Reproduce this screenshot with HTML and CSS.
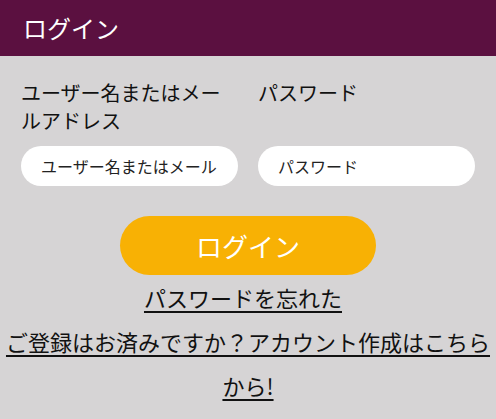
FILE: index.html
```html
<!DOCTYPE html>
<html lang="ja">
<head>
    <meta charset="UTF-8">
    <meta name="viewport" content="width=device-width, initial-scale=1.0">
    <title>ログイン</title>
    <link rel="stylesheet" href="styles.css">
</head>
<body>
    <header class="top-bar">
        <h1>ログイン</h1>
    </header>
    <main class="login-page">
        <form class="login-form">
            <div class="fields">
                <label for="username">ユーザー名またはメールアドレス</label>
                <label for="password">パスワード</label>
                <input type="text" id="username" name="username" placeholder="ユーザー名またはメール">
                <input type="password" id="password" name="password" placeholder="パスワード">
            </div>
            <button type="submit" class="login-btn">ログイン</button>
        </form>
        <div class="links">
            <p class="forgot"><a href="#">パスワードを忘れた</a></p>
            <p><a href="#">ご登録はお済みですか？アカウント作成はこちらから!</a></p>
        </div>
    </main>
</body>
</html>
```

FILE: styles.css
```css
body {
    margin: 0;
    padding: 0;
    background-color: #d6d4d5;
    color: #111;
    font-family: "Noto Sans CJK JP", "Noto Sans", sans-serif;
}
.top-bar {
    background-color: #5b1040;
    height: 56px;
    padding: 0 23px;
    display: flex;
    align-items: center;
}
.top-bar h1 {
    margin: 0;
    color: white;
    font-size: 24px;
    font-weight: normal;
    line-height: 1;
}
.login-page {
    padding-top: 23px;
}
.login-form {
    display: flex;
    flex-direction: column;
    align-items: center;
}
.fields {
    display: grid;
    grid-template-columns: 217px 217px;
    column-gap: 20px;
    row-gap: 11px;
    align-self: stretch;
    margin: 0 21px;
}
.fields label {
    font-size: 20px;
    line-height: 28px;
    padding-right: 12px;
}
.fields input {
    height: 40px;
    box-sizing: border-box;
    border: none;
    border-radius: 20px;
    background: white;
    padding: 0 20px;
    font-family: inherit;
    font-size: 16px;
    outline: none;
}
.fields input::placeholder {
    color: #222;
}
.login-btn {
    margin-top: 30px;
    width: 256px;
    height: 59px;
    border: none;
    border-radius: 30px;
    background-color: #f8b104;
    color: white;
    font-family: inherit;
    font-size: 26px;
    cursor: pointer;
}
.links {
    text-align: center;
}
.links p {
    margin: 0;
    font-size: 22px;
    line-height: 44px;
}
.links .forgot {
    padding-right: 10px;
}
.links a {
    color: #111;
    text-decoration: underline;
    text-underline-offset: 4px;
}
```
